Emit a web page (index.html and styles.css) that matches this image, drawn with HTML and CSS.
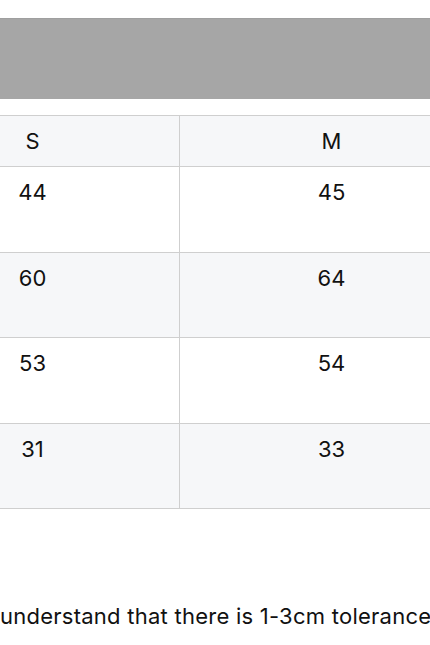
FILE: index.html
```html
<!DOCTYPE html>
<html>
<head>
<meta charset="utf-8">
<link rel="stylesheet" href="styles.css">
</head>
<body>
<div class="page">
  <div class="banner"></div>
  <div class="table-wrap">
    <table class="size-table">
      <colgroup><col class="col-s"><col class="col-m"></colgroup>
      <thead>
        <tr><th>S</th><th>M</th></tr>
      </thead>
      <tbody>
        <tr><td>44</td><td>45</td></tr>
        <tr class="alt"><td>60</td><td>64</td></tr>
        <tr><td>53</td><td>54</td></tr>
        <tr class="alt"><td>31</td><td>33</td></tr>
      </tbody>
    </table>
  </div>
  <p class="note">understand that there is 1-3cm tolerance</p>
</div>
</body>
</html>
```

FILE: styles.css
```css
html, body {
  margin: 0;
  padding: 0;
  background: #ffffff;
}
.page {
  width: 430px;
  overflow: hidden;
  font-family: Inter, "Noto Sans", "Liberation Sans", sans-serif;
  color: #111111;
}
.banner {
  margin-top: 18px;
  height: 80px;
  background: #a6a6a6;
  border-top: 1px solid #9f9f9f;
}
.table-wrap {
  margin-top: 16px;
  overflow: hidden;
}
.size-table {
  border-collapse: collapse;
  margin-left: -115px;
  table-layout: fixed;
  width: 598px;
  font-size: 22px;
}
.col-s { width: 294px; }
.col-m { width: 304px; }
.size-table th,
.size-table td {
  border: 1px solid #cfcfcf;
  text-align: center;
}
.size-table th {
  height: 50px;
  padding: 0;
  font-weight: 400;
  background: #f6f7f9;
  vertical-align: middle;
}
.size-table td {
  height: 85.5px;
  box-sizing: border-box;
  padding: 12px 0 0;
  vertical-align: top;
  line-height: 26px;
}
.size-table tr.alt td {
  background: #f6f7f9;
}
.note {
  margin: 94px 0 0;
  white-space: nowrap;
  font-size: 22px;
  line-height: 26px;
  letter-spacing: 0.25px;
}
```
